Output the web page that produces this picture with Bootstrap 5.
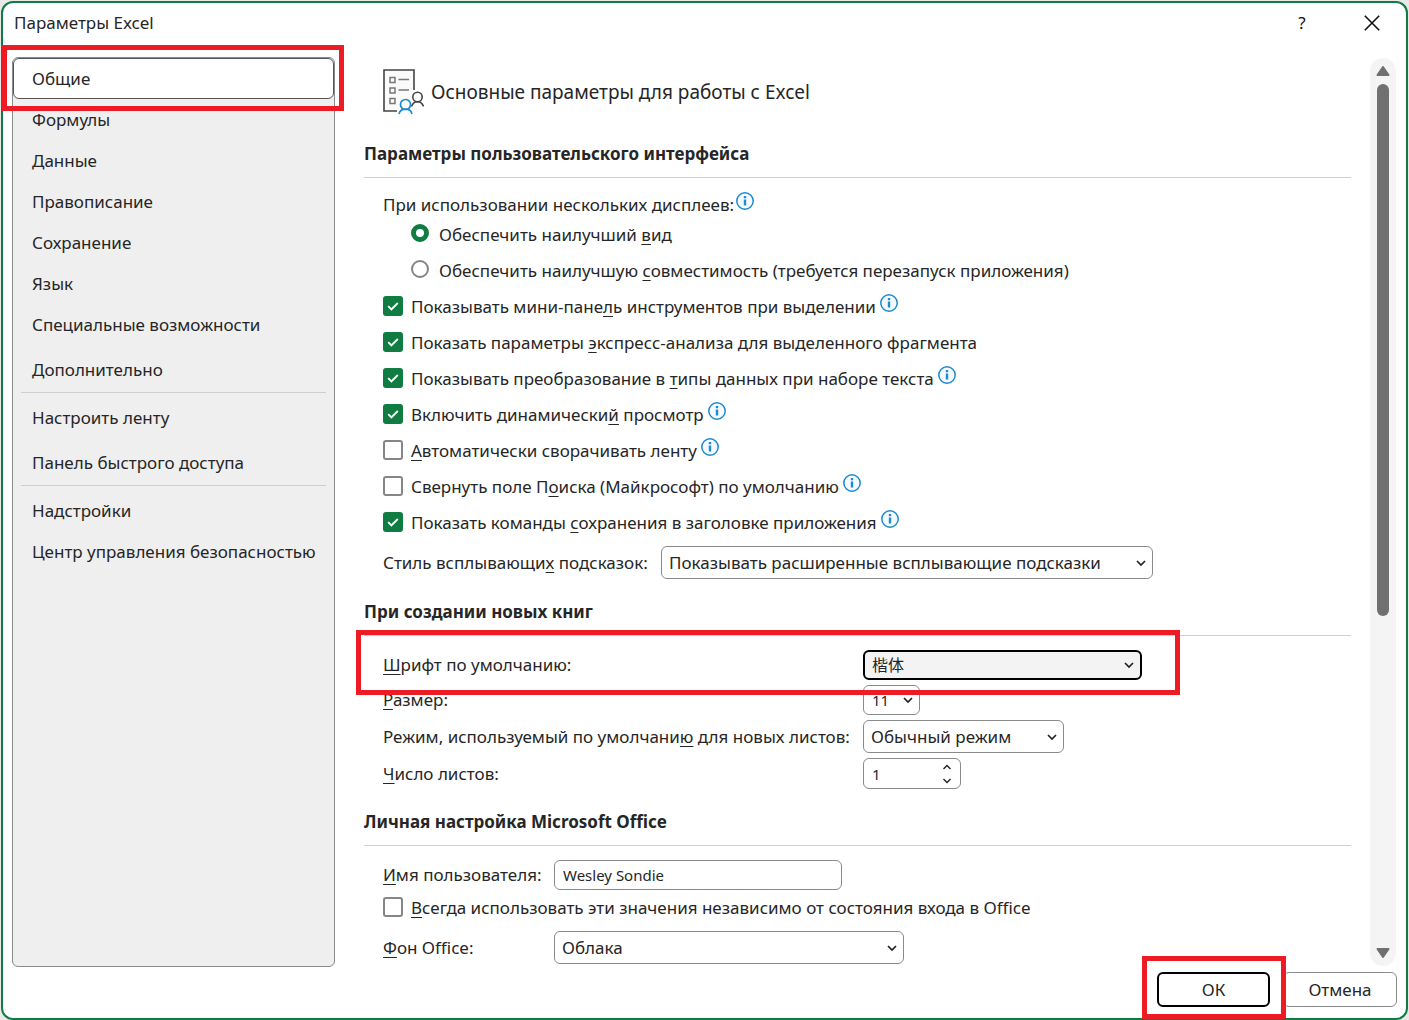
<!DOCTYPE html>
<html lang="ru">
<head>
<meta charset="utf-8">
<meta name="viewport" content="width=device-width, initial-scale=1">
<title>Параметры Excel</title>
<link href="https://cdn.jsdelivr.net/npm/bootstrap@5.3.0/dist/css/bootstrap.min.css" rel="stylesheet">
<style>
:root { --ink:#262626; --green:#107c41; --line:#8a8a8a; --soft:#d0d0d0; --mark:#ed1c24; }
body { background:#e9e9e9; padding:1px 1px 0; font-family:"Noto Sans","Open Sans","Noto Sans CJK SC",sans-serif; font-size:17px; line-height:24px; color:var(--ink); }
.dialog { border:2px solid var(--green); border-radius:12px; background:#fff; }
.titlebar { height:54px; padding:8px 11px 0; }
.title-btn { background:none; border:0; padding:0; width:30px; height:24px; color:#111; line-height:24px; }
.title-btn + .title-btn { margin-left:40px; }
.work { padding:0 10px 0 9px; }
.side { width:323px; flex-shrink:0; background:#efefef; border:1px solid var(--line); border-radius:6px; }
.side a { display:block; height:41px; padding:9px 19px 8px; color:var(--ink); text-decoration:none; white-space:nowrap; position:relative; }
.side a.picked { background:#fff; padding:8px 18px; border:1px solid #555; border-radius:6px; line-height:23px; }
.side hr { margin:2px 8px 4px; opacity:1; border-top:1px solid #cecece; }
.gap-top { margin-top:4px; }
.content-col { padding:12px 19px 0 29px; min-width:0; }
.page-head { padding-left:19px; gap:7px; font-size:19px; margin-bottom:27px; height:46px; }
.sect-title { font-size:17px; line-height:24px; font-weight:700; margin:0; padding-bottom:11px; border-bottom:1px solid var(--soft); }
.sect { padding:14px 0 21px 19px; }
.opt { height:36px; gap:8px; white-space:nowrap; }
.opt.indent { padding-left:28px; gap:10px; }
.hint { width:18px; height:18px; margin-bottom:7px; flex-shrink:0; }
.opt .hint { margin-left:-4px; margin-bottom:9px; }
.first-line { height:25px; gap:2px; white-space:nowrap; }
.form-check-input.tick { width:20px; height:20px; margin:0 0 2px; border:2px solid #868686; border-radius:3px; flex-shrink:0; background-color:#fff; }
.form-check-input.tick:checked { background-color:var(--green); border-color:var(--green); background-image:url("data:image/svg+xml,%3Csvg xmlns='http://www.w3.org/2000/svg' viewBox='0 0 16 16'%3E%3Cpath d='M3.2 8.2l3.2 3.2 6.4-6.4' fill='none' stroke='%23fff' stroke-width='1.9'/%3E%3C/svg%3E"); }
.form-check-input.dot { width:18px; height:18px; margin:0 0 4px; border:2px solid #868686; flex-shrink:0; }
.form-check-input.dot:checked { background:#fff; border:5px solid var(--green); }
u { text-underline-offset:3px; text-decoration-thickness:1px; }
.field { position:relative; }
.field + .field, .after-opt { margin-top:5px; }
.field > label { white-space:nowrap; flex-shrink:0; }
.w-tip { width:278px; } .w-book { width:480px; } .w-user { width:171px; }
.form-select.pick, .form-control.pick { font-size:17px; line-height:24px; color:var(--ink); border:1px solid var(--line); border-radius:6px; height:33px; padding:4px 26px 4px 7px; background-color:#fff; }
.form-select.pick { background-image:url("data:image/svg+xml,%3Csvg xmlns='http://www.w3.org/2000/svg' viewBox='0 0 10 10'%3E%3Cpath d='M1 3l4 4 4-4' fill='none' stroke='%23222' stroke-width='1.7'/%3E%3C/svg%3E"); background-size:10px 10px; background-position:right 6px center; }
.form-select.pick.low, .form-control.pick.low { height:30px; font-size:15px; padding:2px 24px 2px 8px; }
.form-select.pick.current { border:2px solid #000; background-color:#f3f3f3; font-size:16px; padding:1px 24px 1px 7px; }
.s-tip { width:492px; } .s-font { width:279px; } .s-size { width:57px; } .s-mode { width:201px; } .s-user { width:288px; } .s-back { width:350px; }
.stepper { width:98px; height:31px; border:1px solid var(--line); border-radius:6px; padding:0 7px 0 8px; }
.stepper input { border:0; outline:0; padding:0; width:60px; font-size:15px; color:var(--ink); background:none; appearance:textfield; -moz-appearance:textfield; }
.stepper input::-webkit-inner-spin-button { appearance:none; -webkit-appearance:none; margin:0; }
.stepper button { border:0; background:none; padding:0; height:14px; width:11px; line-height:1; display:flex; align-items:center; }
.frame { position:absolute; border:5px solid var(--mark); pointer-events:none; z-index:5; }
.frame-nav { inset:-14px -11px -13px -12px; }
.frame-font { inset:-20px auto -15px -27px; width:824px; }
.frame-ok { inset:-18px -18px -14px -17px; }
.track { width:26px; flex-shrink:0; margin:1px 0; background:#f4f4f4; border-radius:13px; padding:8px 0; }
.thumb { width:12px; border-radius:6px; background:#707070; flex:532 1 0; margin-top:8px; }
.rest { flex:332 1 0; }
.foot { padding:5px 9px 11px; gap:13px; }
.cmd { width:114px; height:35px; border:1px solid var(--line); border-radius:6px; background:#fff; padding:0; font-size:17px; color:var(--ink); position:relative; }
.cmd.main { border:2px solid #000; width:113px; }
</style>
</head>
<body class="d-flex flex-column min-vh-100">
<svg width="0" height="0" class="position-absolute" aria-hidden="true">
  <symbol id="info" viewBox="0 0 18 18"><circle cx="9" cy="9" r="8.2" fill="#f4faff" stroke="#1e8bcd" stroke-width="1.5"/><path d="M7.800 4h2.400v2.200H7.800zM7.800 7.400h2.400v6H7.800z" fill="#1e8bcd"/></symbol>
</svg>
<div class="dialog flex-grow-1 d-flex flex-column">
  <header class="titlebar d-flex align-items-start">
    <span class="flex-grow-1">Параметры Excel</span>
    <button class="title-btn" aria-label="Справка">?</button>
    <button class="title-btn me-2 d-flex align-items-center justify-content-center" aria-label="Закрыть"><svg width="16" height="16" viewBox="0 0 16 16"><path d="M.8.8l14.400 14.400M15.200.8L.8 15.200" stroke="#111" stroke-width="1.6" fill="none"/></svg></button>
  </header>

  <div class="work flex-grow-1 d-flex">
    <nav class="side">
      <a href="#" class="picked" aria-current="page">Общие<span class="frame frame-nav"></span></a>
      <a href="#">Формулы</a>
      <a href="#">Данные</a>
      <a href="#">Правописание</a>
      <a href="#">Сохранение</a>
      <a href="#">Язык</a>
      <a href="#">Специальные возможности</a>
      <a href="#" class="gap-top">Дополнительно</a>
      <hr>
      <a href="#">Настроить ленту</a>
      <a href="#" class="gap-top">Панель быстрого доступа</a>
      <hr>
      <a href="#">Надстройки</a>
      <a href="#">Центр управления безопасностью</a>
    </nav>

    <main class="content-col flex-grow-1">
      <div class="page-head d-flex align-items-center">
        <svg width="41" height="46" viewBox="0 0 41 46" fill="none">
          <path d="M31 21V1H1v41h13" stroke="#444" stroke-width="1.600" fill="#fafafa"/>
          <path d="M7 8.500h5v5H7zM7 19h5v5H7zM7 29.500h5v5H7z" stroke="#777" stroke-width="1.500"/>
          <path d="M15.500 10.500h10.500M15.500 21h10.500" stroke="#777" stroke-width="1.500"/>
          <circle cx="34.500" cy="28" r="4.700" stroke="#444" stroke-width="1.600" fill="#fff"/>
          <path d="M28.500 37.500c1-3 3-4.800 6-4.800s5 1.800 6 4.800" stroke="#444" stroke-width="1.600"/>
          <circle cx="22.500" cy="35.500" r="5" stroke="#1e8bcd" stroke-width="1.700" fill="#fff"/>
          <path d="M16 45c.8-3.200 3-4.800 6.500-4.800S28.200 41.800 29 45" stroke="#1e8bcd" stroke-width="1.700"/>
        </svg>
        <span>Основные параметры для работы с Excel</span>
      </div>

      <h2 class="sect-title">Параметры пользовательского интерфейса</h2>
      <div class="sect">
        <div class="first-line d-flex align-items-center"><span>При использовании нескольких дисплеев:</span><svg class="hint"><use href="#info"/></svg></div>
        <div class="opt indent d-flex align-items-center"><input class="form-check-input dot" type="radio" name="disp" id="r1" checked><label for="r1">Обеспечить наилучший <u>в</u>ид</label></div>
        <div class="opt indent d-flex align-items-center"><input class="form-check-input dot" type="radio" name="disp" id="r2"><label for="r2">Обеспечить наилучшую <u>с</u>овместимость (требуется перезапуск приложения)</label></div>
        <div class="opt d-flex align-items-center"><input class="form-check-input tick" type="checkbox" id="c1" checked><label for="c1">Показывать мини-пане<u>л</u>ь инструментов при выделении</label><svg class="hint"><use href="#info"/></svg></div>
        <div class="opt d-flex align-items-center"><input class="form-check-input tick" type="checkbox" id="c2" checked><label for="c2">Показать параметры <u>э</u>кспресс-анализа для выделенного фрагмента</label></div>
        <div class="opt d-flex align-items-center"><input class="form-check-input tick" type="checkbox" id="c3" checked><label for="c3">Показывать преобразование в <u>т</u>ипы данных при наборе текста</label><svg class="hint"><use href="#info"/></svg></div>
        <div class="opt d-flex align-items-center"><input class="form-check-input tick" type="checkbox" id="c4" checked><label for="c4">Включить динамически<u>й</u> просмотр</label><svg class="hint"><use href="#info"/></svg></div>
        <div class="opt d-flex align-items-center"><input class="form-check-input tick" type="checkbox" id="c5"><label for="c5"><u>А</u>втоматически сворачивать ленту</label><svg class="hint"><use href="#info"/></svg></div>
        <div class="opt d-flex align-items-center"><input class="form-check-input tick" type="checkbox" id="c6"><label for="c6">Свернуть поле П<u>о</u>иска (Майкрософт) по умолчанию</label><svg class="hint"><use href="#info"/></svg></div>
        <div class="opt d-flex align-items-center"><input class="form-check-input tick" type="checkbox" id="c7" checked><label for="c7">Показать команды <u>с</u>охранения в заголовке приложения</label><svg class="hint"><use href="#info"/></svg></div>
        <div class="field after-opt d-flex align-items-center"><label class="w-tip" for="s1">Стиль всплывающи<u>х</u> подсказок:</label><select class="form-select pick s-tip" id="s1"><option>Показывать расширенные всплывающие подсказки</option></select></div>
      </div>

      <h2 class="sect-title">При создании новых книг</h2>
      <div class="sect">
        <div class="field d-flex align-items-center"><label class="w-book" for="s2"><u>Ш</u>рифт по умолчанию:</label><select class="form-select pick low current s-font" id="s2"><option>楷体</option></select><span class="frame frame-font"></span></div>
        <div class="field d-flex align-items-center"><label class="w-book" for="s3"><u>Р</u>азмер:</label><select class="form-select pick low s-size" id="s3"><option>11</option></select></div>
        <div class="field d-flex align-items-center"><label class="w-book" for="s4">Режим, используемый по умолчани<u>ю</u> для новых листов:</label><select class="form-select pick s-mode" id="s4"><option>Обычный режим</option></select></div>
        <div class="field d-flex align-items-center"><label class="w-book" for="n1"><u>Ч</u>исло листов:</label>
          <div class="stepper d-flex align-items-center justify-content-between"><input type="number" id="n1" value="1" min="1">
            <div><button aria-label="Больше"><svg width="10" height="6" viewBox="0 0 10 6"><path d="M1.500 5L5 1.500 8.500 5" fill="none" stroke="#222" stroke-width="1.400"/></svg></button><button aria-label="Меньше"><svg width="10" height="6" viewBox="0 0 10 6"><path d="M1.500 1L5 4.500 8.500 1" fill="none" stroke="#222" stroke-width="1.400"/></svg></button></div>
          </div></div>
      </div>

      <h2 class="sect-title">Личная настройка Microsoft Office</h2>
      <div class="sect pb-0">
        <div class="field d-flex align-items-center"><label class="w-user" for="t1"><u>И</u>мя пользователя:</label><input class="form-control pick low s-user" type="text" id="t1" value="Wesley Sondie"></div>
        <div class="opt d-flex align-items-center"><input class="form-check-input tick" type="checkbox" id="c8"><label for="c8"><u>В</u>сегда использовать эти значения независимо от состояния входа в Office</label></div>
        <div class="field after-opt d-flex align-items-center"><label class="w-user" for="s5"><u>Ф</u>он Office:</label><select class="form-select pick s-back" id="s5"><option>Облака</option></select></div>
      </div>
    </main>

    <div class="track d-flex flex-column align-items-center" aria-hidden="true">
      <svg width="14" height="10" viewBox="0 0 14 10"><path d="M7 1l5.500 8h-11z" fill="#707070" stroke="#707070" stroke-width="2" stroke-linejoin="round"/></svg>
      <div class="thumb"></div>
      <div class="rest"></div>
      <svg width="14" height="10" viewBox="0 0 14 10"><path d="M7 9l5.500-8h-11z" fill="#707070" stroke="#707070" stroke-width="2" stroke-linejoin="round"/></svg>
    </div>
  </div>

  <footer class="foot d-flex justify-content-end">
    <button class="cmd main">ОК<span class="frame frame-ok"></span></button>
    <button class="cmd">Отмена</button>
  </footer>
</div>
<script src="https://cdn.jsdelivr.net/npm/bootstrap@5.3.0/dist/js/bootstrap.bundle.min.js"></script>
</body>
</html>
